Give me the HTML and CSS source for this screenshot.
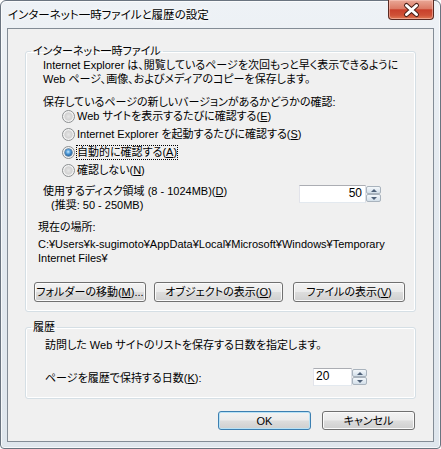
FILE: index.html
```html
<!DOCTYPE html>
<html lang="ja">
<head>
<meta charset="utf-8">
<title>インターネット一時ファイルと履歴の設定</title>
<link rel="stylesheet" href="styles.css">
</head>
<body>
<div class="window">
  <div class="titlebar">
    <span class="title">インターネット一時ファイルと履歴の設定</span>
    <div class="close">
      <svg width="46" height="20" viewBox="0 0 46 20">
        <path d="M18.5 5.5 L28.5 14.5 M28.5 5.5 L18.5 14.5" stroke="#4a2018" stroke-width="5" stroke-linecap="round" fill="none"/>
        <path d="M18.5 5.5 L28.5 14.5 M28.5 5.5 L18.5 14.5" stroke="#ffffff" stroke-width="3" stroke-linecap="round" fill="none"/>
      </svg>
    </div>
  </div>
  <div class="client">
    <fieldset class="group g1">
      <legend>インターネット一時ファイル</legend>
      <p class="desc">Internet Explorer は、閲覧しているページを次回もっと早く表示できるように<br>Web ページ、画像、およびメディアのコピーを保存します。</p>
      <p class="q">保存しているページの新しいバージョンがあるかどうかの確認:</p>
      <div class="radios">
        <div class="radio-row"><span class="radio"></span><span class="rlabel">Web サイトを表示するたびに確認する(<u>E</u>)</span></div>
        <div class="radio-row"><span class="radio"></span><span class="rlabel">Internet Explorer を起動するたびに確認する(<u>S</u>)</span></div>
        <div class="radio-row"><span class="radio checked"></span><span class="rlabel focus">自動的に確認する(<u>A</u>)</span></div>
        <div class="radio-row"><span class="radio"></span><span class="rlabel">確認しない(<u>N</u>)</span></div>
      </div>
      <div class="disk">
        <div class="disk-label">
          <div>使用するディスク領域 (8 - 1024MB)(<u>D</u>)</div>
          <div class="rec">(推奨: 50 - 250MB)</div>
        </div>
        <div class="spin s1">
          <div class="spin-input right">50</div>
          <div class="spin-btns">
            <div class="sb up"><span class="tri-up"></span></div>
            <div class="sb down"><span class="tri-down"></span></div>
          </div>
        </div>
      </div>
      <div class="loc">現在の場所:</div>
      <div class="path">C:¥Users¥k-sugimoto¥AppData¥Local¥Microsoft¥Windows¥Temporary<br>Internet Files¥</div>
      <div class="btns">
        <div class="btn b1">フォルダーの移動(<u>M</u>)...</div>
        <div class="btn b2">オブジェクトの表示(<u>O</u>)</div>
        <div class="btn b3">ファイルの表示(<u>V</u>)</div>
      </div>
    </fieldset>
    <fieldset class="group g2">
      <legend>履歴</legend>
      <p class="hdesc">訪問した Web サイトのリストを保存する日数を指定します。</p>
      <div class="days">
        <span class="days-label">ページを履歴で保持する日数(<u>K</u>):</span>
        <div class="spin s2">
          <div class="spin-input">20</div>
          <div class="spin-btns">
            <div class="sb up"><span class="tri-up"></span></div>
            <div class="sb down"><span class="tri-down"></span></div>
          </div>
        </div>
      </div>
    </fieldset>
    <div class="dlg-btns">
      <div class="btn default ok">OK</div>
      <div class="btn cancel">キャンセル</div>
    </div>
  </div>
</div>
</body>
</html>
```

FILE: styles.css
```css
* { box-sizing: border-box; }
html, body { margin: 0; padding: 0; }
body {
  width: 441px;
  height: 449px;
  overflow: hidden;
  font-family: "Liberation Sans", "Noto Sans CJK JP", sans-serif;
  font-size: 11px;
  font-feature-settings: "palt";
  color: #000;
  background: #ffffff;
}
u { text-decoration: underline; text-underline-offset: 1px; }
p { margin: 0; }

.window {
  width: 441px;
  height: 449px;
  border: 1px solid #6a7480;
  border-radius: 6px 6px 4px 4px;
  background: linear-gradient(180deg, #eef2f6 0%, #e4eaf0 40%, #dfe6ed 100%);
  padding: 0 6px 6px;
  display: flex;
  flex-direction: column;
  box-shadow: inset 0 0 0 1px rgba(255,255,255,0.7);
}
.titlebar {
  height: 27px;
  position: relative;
  flex: none;
}
.title {
  display: block;
  padding: 7px 0 0 1px;
  line-height: 14px;
  font-size: 11.5px;
  text-shadow: 0 0 6px #fff, 0 0 3px #fff;
  white-space: nowrap;
}
.close {
  position: absolute;
  right: 0;
  top: -1px;
  width: 46px;
  height: 20px;
  border: 1px solid #5a2a22;
  border-top: none;
  border-radius: 0 0 4px 4px;
  background: linear-gradient(180deg, #e9a897 0%, #dc7b66 45%, #c9402b 52%, #cf5137 80%, #e07a55 100%);
  box-shadow: inset 0 0 0 1px rgba(255,210,200,0.5);
  overflow: hidden;
}
.close svg { display: block; position: absolute; left: -1px; top: 0; }

.client {
  flex: 1;
  border: 1px solid #838c96;
  background: #f0f0f0;
  display: flex;
  flex-direction: column;
}

.group {
  margin: 0 0 0 17px;
  width: 391px;
  border: 1px solid #d5dfe5;
  border-radius: 3px;
  box-shadow: inset 0 0 0 1px #ffffff;
  min-width: 0;
}
.group legend {
  padding: 0 2px;
  margin-left: -7px;
  line-height: 14px;
  white-space: nowrap;
}
.g1 {
  margin-top: 15px;
  padding: 0 0 9px 12px;
}
.desc {
  margin-left: 5px;
  line-height: 14px;
  white-space: nowrap;
}
.q {
  margin: 9px 0 0 5px;
  line-height: 14px;
  white-space: nowrap;
}
.radios {
  margin: -2px 0 0 24px;
}
.radio-row {
  height: 18px;
  display: flex;
  align-items: center;
  gap: 1px;
  white-space: nowrap;
}
.radio {
  width: 13px;
  height: 13px;
  border-radius: 50%;
  border: 1px solid #8c8f91;
  background: radial-gradient(circle at 50% 50%, #e6e6e6 0, #d2d2d2 45%, #f5f5f5 70%, #fafafa 100%);
  box-shadow: inset 0 0 0 1px #f4f4f4;
  flex: none;
  position: relative;
}
.radio.checked::after {
  content: "";
  position: absolute;
  left: 2px;
  top: 2px;
  width: 7px;
  height: 7px;
  border-radius: 50%;
  background: radial-gradient(circle at 45% 40%, #c9eaff 0, #58a1dc 35%, #1b5e9e 75%, #0d3f73 100%);
  box-shadow: 0 0 0 0.5px #2a5d8a;
}
.rlabel {
  border: 1px dotted transparent;
  line-height: 13px;
  padding: 0;
}
.rlabel.focus { border-color: #000; }

.disk {
  margin-top: 5px;
  display: flex;
  align-items: flex-start;
}
.disk-label {
  margin-left: 5px;
  line-height: 14px;
  white-space: nowrap;
}
.rec { padding-left: 8px; }
.spin {
  display: flex;
  height: 18px;
  flex: none;
}
.s1 {
  margin: 1px 34px 0 auto;
}
.spin-input {
  height: 18px;
  border: 1px solid;
  border-color: #abadb3 #dbdfe6 #e3e9ef #e2e3ea;
  background: #fff;
  line-height: 15px;
  font-size: 12px;
}
.s1 .spin-input {
  width: 67px;
  text-align: right;
  padding-right: 3px;
}
.s2 .spin-input {
  width: 39px;
  padding-left: 2px;
}
.spin-btns {
  width: 15px;
  height: 18px;
  display: flex;
  flex-direction: column;
  gap: 0;
  padding: 1px 0;
}
.sb {
  flex: 1;
  border: 1px solid #a9b3bd;
  border-radius: 2px;
  background: linear-gradient(180deg, #f4f8fb 0%, #e3ebf2 50%, #d3dfe9 100%);
  display: flex;
  align-items: center;
  justify-content: center;
}
.tri-up {
  width: 0; height: 0;
  border-left: 3px solid transparent;
  border-right: 3px solid transparent;
  border-bottom: 3px solid #4f6178;
}
.tri-down {
  width: 0; height: 0;
  border-left: 3px solid transparent;
  border-right: 3px solid transparent;
  border-top: 3px solid #4f6178;
}

.loc {
  margin-top: 8px;
  line-height: 14px;
}
.path {
  margin-top: 3px;
  line-height: 14px;
  white-space: nowrap;
}
.btns {
  margin: 17px 0 0 -4px;
  display: flex;
}
.btn {
  height: 20px;
  border: 1px solid #707070;
  border-radius: 3px;
  background: linear-gradient(180deg, #f3f3f3 0%, #ebebeb 48%, #dddddd 52%, #cfcfcf 100%);
  box-shadow: inset 0 0 0 1px #fbfbfb;
  display: flex;
  align-items: center;
  justify-content: center;
  line-height: 14px;
  white-space: nowrap;
  flex: none;
}
.b1 { width: 112px; }
.b2 { width: 129px; margin-left: 8px; }
.b3 { width: 112px; margin-left: 10px; }

.g2 {
  margin-top: 8px;
  padding: 0 0 12px 12px;
}
.hdesc {
  margin: 4px 0 0 7px;
  line-height: 14px;
  white-space: nowrap;
}
.days {
  margin: 16px 0 0 7px;
  display: flex;
  align-items: center;
  height: 18px;
  white-space: nowrap;
}
.s2 { margin-left: auto; margin-right: 48px; }

.dlg-btns {
  margin: 12px 18px 0 0;
  display: flex;
  justify-content: flex-end;
  gap: 11px;
}
.dlg-btns .btn { width: 93px; height: 19px; }
.btn.default {
  border-color: #3c7fb1;
  box-shadow: inset 0 0 0 1px #b8e2f6;
}
```
